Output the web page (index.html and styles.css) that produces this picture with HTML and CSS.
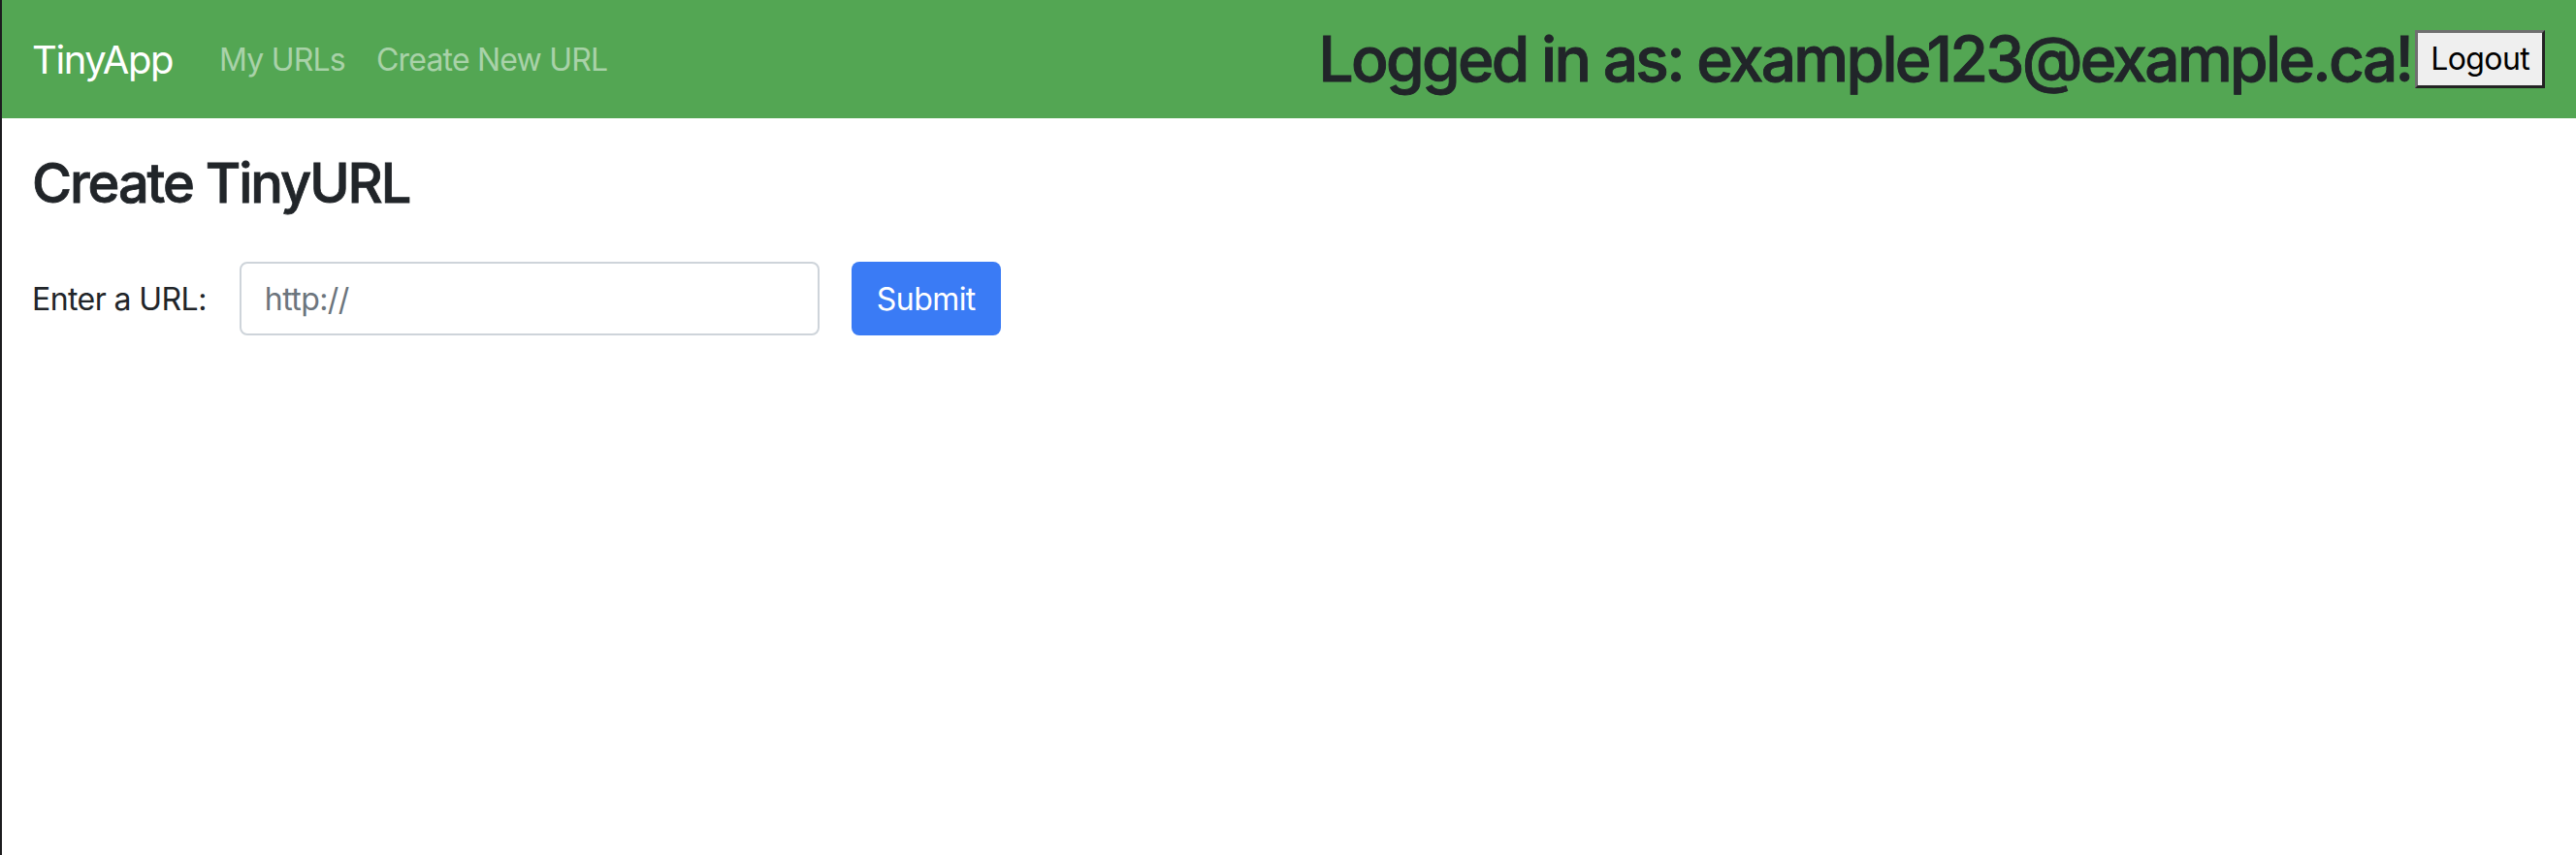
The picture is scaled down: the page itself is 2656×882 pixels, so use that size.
FILE: index.html
```html
<!DOCTYPE html>
<html lang="en">
<head>
<meta charset="utf-8">
<title>TinyApp</title>
<link rel="stylesheet" href="styles.css">
</head>
<body>
  <nav class="navbar">
    <a class="brand" href="#">TinyApp</a>
    <ul class="nav-links">
      <li><a class="nav-link" href="#">My URLs</a></li>
      <li><a class="nav-link" href="#">Create New URL</a></li>
    </ul>
    <form class="user-box">
      <h2 class="user-title">Logged in as: example123@example.ca!</h2>
      <button class="logout" type="button">Logout</button>
    </form>
  </nav>
  <main class="content">
    <h3 class="page-title">Create TinyURL</h3>
    <form class="url-form">
      <label class="url-label" for="longURL">Enter a URL:</label>
      <input class="url-input" id="longURL" type="text" placeholder="http://">
      <button class="submit-btn" type="button">Submit</button>
    </form>
  </main>
</body>
</html>
```

FILE: styles.css
```css
* {
  box-sizing: border-box;
}

html, body {
  height: 100%;
}

body {
  margin: 0;
  border-left: 2px solid #1c1c1e;
  background: #ffffff;
  color: #212529;
  font-family: Inter, "Noto Sans", "Liberation Sans", sans-serif;
}

.navbar {
  display: flex;
  align-items: center;
  height: 122px;
  padding: 0 32px 0 31px;
  background: #53a653;
}

.brand {
  font-size: 40px;
  letter-spacing: -0.035em;
  color: #ffffff;
  text-decoration: none;
  margin-right: 32px;
}

.nav-links {
  display: flex;
  list-style: none;
  margin: 0;
  padding: 0;
}

.nav-link {
  display: block;
  padding: 0 16px;
  font-size: 32px;
  letter-spacing: -0.025em;
  color: rgba(255, 255, 255, 0.5);
  text-decoration: none;
}

.user-box {
  display: flex;
  align-items: center;
  margin: 0 0 0 auto;
}

.user-title {
  margin: 0 4px 0 0;
  font-size: 64px;
  font-weight: 500;
  letter-spacing: -0.042em;
  line-height: 1.2;
  color: #212529;
  -webkit-text-stroke: 0.9px #212529;
}

.logout {
  height: 60px;
  padding: 0 13px;
  font-family: inherit;
  font-size: 32px;
  letter-spacing: -0.02em;
  color: #000000;
  background: #efefef;
  border-style: solid;
  border-width: 3px;
  border-color: #6f6f6f #232323 #232323 #6f6f6f;
}

.content {
  padding: 0 0 0 31px;
}

.page-title {
  margin: 34px 0 47px;
  font-size: 56px;
  font-weight: 500;
  letter-spacing: -0.037em;
  line-height: 1.2;
  color: #212529;
  -webkit-text-stroke: 0.8px #212529;
}

.url-form {
  display: flex;
  align-items: center;
}

.url-label {
  font-size: 32px;
  letter-spacing: -0.018em;
  color: #212529;
  margin-right: 34px;
}

.url-input {
  width: 598px;
  height: 76px;
  padding: 0 24px;
  font-family: inherit;
  font-size: 32px;
  letter-spacing: -0.018em;
  color: #495057;
  border: 2px solid #ced4da;
  border-radius: 8px;
  margin-right: 33px;
}

.url-input::placeholder {
  color: #6c757d;
}

.submit-btn {
  width: 154px;
  height: 76px;
  padding: 0;
  font-family: inherit;
  font-size: 32px;
  letter-spacing: -0.018em;
  color: #ffffff;
  background: #3a7bf5;
  border: none;
  border-radius: 8px;
}
```
